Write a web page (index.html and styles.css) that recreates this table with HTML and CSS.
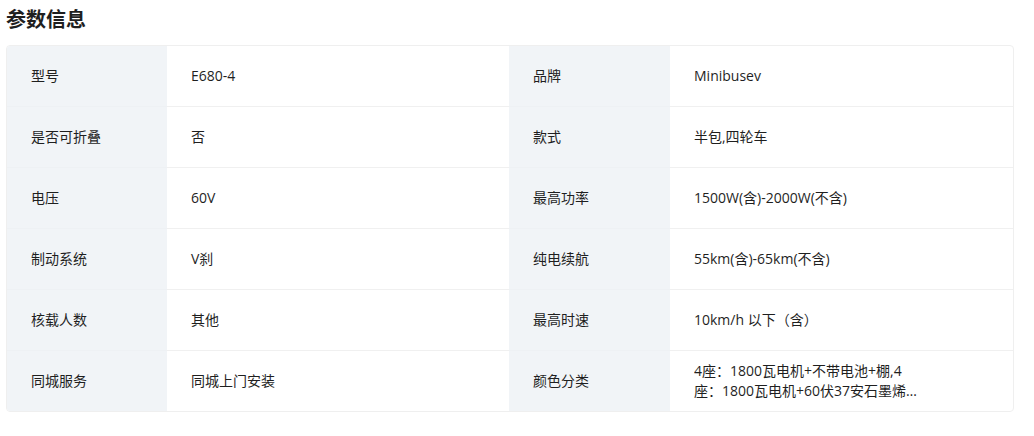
FILE: index.html
```html
<!DOCTYPE html>
<html lang="zh-CN">
<head>
<meta charset="utf-8">
<title>参数信息</title>
<link rel="stylesheet" href="styles.css">
</head>
<body>
<div class="page">
  <h2 class="title">参数信息</h2>
  <div class="params">
    <div class="cell label">型号</div>
    <div class="cell value">E680-4</div>
    <div class="cell label">品牌</div>
    <div class="cell value">Minibusev</div>

    <div class="cell label">是否可折叠</div>
    <div class="cell value">否</div>
    <div class="cell label">款式</div>
    <div class="cell value">半包,四轮车</div>

    <div class="cell label">电压</div>
    <div class="cell value">60V</div>
    <div class="cell label">最高功率</div>
    <div class="cell value">1500W(含)-2000W(不含)</div>

    <div class="cell label">制动系统</div>
    <div class="cell value">V刹</div>
    <div class="cell label">纯电续航</div>
    <div class="cell value">55km(含)-65km(不含)</div>

    <div class="cell label">核载人数</div>
    <div class="cell value">其他</div>
    <div class="cell label">最高时速</div>
    <div class="cell value">10km/h 以下（含）</div>

    <div class="cell label last">同城服务</div>
    <div class="cell value last">同城上门安装</div>
    <div class="cell label last">颜色分类</div>
    <div class="cell value last"><span class="clamp">4座：1800瓦电机+不带电池+棚,4座：1800瓦电机+60伏37安石墨烯电池+棚</span></div>
  </div>
</div>
</body>
</html>
```

FILE: styles.css
```css
* { box-sizing: border-box; }
html, body { margin: 0; padding: 0; background: #fff; }
body {
  font-family: "Open Sans", "Noto Sans CJK SC", sans-serif;
  color: #1f1f1f;
}
.page { padding: 5px 20px 0 6px; }
.title {
  margin: 0;
  height: 40px;
  line-height: 28px;
  font-family: "Noto Sans CJK SC", sans-serif;
  font-size: 20px;
  font-weight: 700;
  color: #1f1f1f;
}
.params {
  display: grid;
  grid-template-columns: 160px 342px 161px 1fr;
  border: 1px solid #efefef;
  border-radius: 4px;
  overflow: hidden;
}
.cell {
  height: 61px;
  display: flex;
  align-items: center;
  padding: 0 24px;
  font-size: 14px;
  line-height: 20px;
  border-bottom: 1px solid #f0f0f0;
}
.cell.last { border-bottom: 0; height: 60px; }
.label { background: #f1f4f7; border-bottom-color: #eef1f4; }
.clamp {
  display: -webkit-box;
  -webkit-box-orient: vertical;
  -webkit-line-clamp: 2;
  overflow: hidden;
  max-width: 226px;
}
```
